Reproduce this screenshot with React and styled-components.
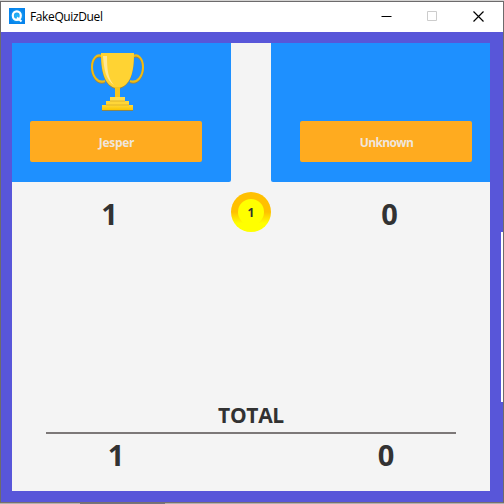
import React from "react";
import styled, { createGlobalStyle } from "styled-components";

const GlobalStyle = createGlobalStyle`
  *, *::before, *::after { box-sizing: border-box; }
  html, body { margin: 0; padding: 0; overflow: hidden; background: #c8c7c6; }
`;

const Desktop = styled.div`
  width: 504px;
  height: 504px;
  overflow: hidden;
  padding-top: 1px;
  position: relative;
  background: linear-gradient(#d4d3d2 0 50%, #b3b0b0 50%);
  font-family: "Open Sans", "Noto Sans", sans-serif;
  color: #323232;
`;

const Window = styled.div`
  height: 502px;
  display: flex;
  flex-direction: column;
  border: 1px solid #6d6b6c;
  border-bottom-color: #77706f;
  background: #5856d9;
`;

const TitleBar = styled.header`
  height: 30px;
  flex: none;
  display: flex;
  align-items: center;
  padding: 0 2px 2px 8px;
  background: #fff;
`;

const AppIcon = styled.svg`
  width: 16px;
  height: 16px;
  margin-right: 5px;
`;

const Title = styled.span`
  flex: 1;
  padding-top: 2px;
  font-size: 12px;
  line-height: 16px;
  letter-spacing: -0.38px;
  color: #000;
`;

const Controls = styled.div`
  display: flex;
  height: 28px;
`;

const ControlButton = styled.button`
  width: 46px;
  height: 28px;
  padding: 0;
  border: 0;
  display: grid;
  place-items: center;
  background: none;
  color: ${(p) => (p.$muted ? "#ccc" : "#000")};
`;

const Glyph = styled.svg`
  width: 11px;
  height: 11px;
  fill: none;
  stroke: currentColor;
`;

const Content = styled.main`
  width: 478px;
  height: 448px;
  margin: 11px 0 0 11px;
  display: flex;
  flex-direction: column;
  background: #f4f4f4;
`;

const Players = styled.section`
  display: flex;
  justify-content: space-between;
`;

const PlayerCard = styled.div`
  width: 219px;
  height: 139px;
  display: flex;
  flex-direction: column;
  justify-content: space-between;
  padding: 9px ${(p) => (p.$side === "left" ? "29px 20px 18px" : "18px 20px 29px")};
  background: #1e90ff;
  border-radius: ${(p) => (p.$side === "left" ? "0 0 2px 0" : "0 0 0 2px")};
`;

const TrophySlot = styled.div`
  height: 60px;
  display: flex;
  justify-content: center;
  padding-left: 4px;
`;

const NameButton = styled.button`
  width: 172px;
  height: 41px;
  border: 0;
  border-radius: 2px;
  padding: 2px 0 0 1px;
  background: #ffab1f;
  color: #f0e6dc;
  font: 700 12px "Open Sans", sans-serif;
  letter-spacing: ${(p) => p.$tracking || "0"};
`;

const RoundRow = styled.section`
  display: grid;
  grid-template-columns: 219px 40px 219px;
  margin-top: 10px;
  height: 40px;
`;

const Score = styled.div`
  font-size: 29px;
  font-weight: 700;
  line-height: 40px;
  text-align: center;
  padding-left: ${(p) => p.$indent || "0"};
  padding-top: ${(p) => p.$drop || "0"};
  padding-right: ${(p) => p.$outdent || "0"};
`;

const Coin = styled.div`
  width: 40px;
  height: 40px;
  border-radius: 50%;
  display: grid;
  place-items: center;
  background: linear-gradient(#ffc000 0 50%, #ff0 78%);
`;

const CoinFace = styled.div`
  width: 26px;
  height: 26px;
  border-radius: 50%;
  background: #ff0;
  text-align: center;
  font-size: 12px;
  line-height: 27px;
  font-weight: 700;
`;

const Totals = styled.section`
  margin-top: auto;
  height: 94px;
  padding: 0 34px;
`;

const TotalLabel = styled.h2`
  margin: 0;
  height: 35px;
  text-align: center;
  font-size: 21px;
  line-height: 37px;
  font-weight: 700;
  letter-spacing: -0.3px;
`;

const Divider = styled.hr`
  width: 410px;
  height: 2px;
  margin: 0;
  border: 0;
  background: #7c7878;
`;

const TotalRow = styled.div`
  display: grid;
  grid-template-columns: 140px 130px 140px;
`;

const EdgeStrip = styled.div`
  position: absolute;
  left: 501px;
  top: 232px;
  width: 2px;
  height: 170px;
  background: #fff;
`;

const EdgeShade = styled.div`
  position: absolute;
  left: 80px;
  top: 503px;
  width: 85px;
  height: 1px;
  background: #74757f;
`;

function Trophy() {
  return (
    <svg width="56" height="60" viewBox="0 0 56 60">
      <defs>
        <linearGradient id="base" x1="0" y1="0" x2="0" y2="1">
          <stop offset="0" stopColor="#ffd83a" />
          <stop offset="1" stopColor="#fac400" />
        </linearGradient>
      </defs>
      <g fill="none" strokeWidth="2">
        <path d="M12 4.5C7 1 2 7 2 15s5 17 13 14M43 4.5c5-3.5 10 2.5 10 10.500s-5 17-13 14" stroke="#99864b" transform="translate(0 1)" />
        <path d="M12 4.5C7 1 2 7 2 15s5 17 13 14M43 4.5c5-3.5 10 2.500 10 10.500s-5 17-13 14" stroke="#f0bc12" />
      </g>
      <path d="M11 2h33c0 17-3 34-17 35C14 36 11 19 11 2Z" fill="#a28a3c" />
      <path d="M11 1h33c0 18-3 34-17 35C14 35 11 18 11 1Z" fill="#ffd333" />
      <path d="M13 4h4c0 13 1 23 7 29C16 28 14 18 13 4Z" fill="#ffe797" />
      <path d="M25 35h5v11h-5z" fill="#f6c51b" />
      <path d="M20 45h15v4H20z" fill="#ffdc4a" />
      <path d="M16 49h23v4H16z" fill="#ffd638" />
      <path d="M12 53h31v6H12z" fill="#8b864f" />
      <path d="M12 53h31v5H12z" fill="url(#base)" />
      <path d="M20 49h15M16 53h23" stroke="#c99d22" strokeWidth=".6" />
    </svg>
  );
}

export default function App() {
  return (
    <Desktop>
      <GlobalStyle />
      <Window>
        <TitleBar>
          <AppIcon viewBox="0 0 16 16">
            <defs>
              <radialGradient id="sky">
                <stop stopColor="#2ab9f7" />
                <stop offset="1" stopColor="#0784ec" />
              </radialGradient>
            </defs>
            <path fill="url(#sky)" d="M0 0h16v16H0z" />
            <ellipse cx="7.8" cy="7.6" rx="4" ry="4.3" fill="none" stroke="#fff" strokeWidth="2.2" />
            <path d="m8 9.500 4.500 4" stroke="#fff" strokeWidth="2" />
          </AppIcon>
          <Title>FakeQuizDuel</Title>
          <Controls>
            <ControlButton aria-label="Minimize">
              <Glyph viewBox="0 0 11 11"><path d="M.5 5.500h10" /></Glyph>
            </ControlButton>
            <ControlButton aria-label="Maximize" $muted>
              <Glyph viewBox="0 0 11 11"><path d="M.5.5h9v9h-9z" /></Glyph>
            </ControlButton>
            <ControlButton aria-label="Close">
              <Glyph viewBox="0 0 11 11"><path d="m.5.5 10 10m0-10-10 10" strokeWidth="1.2" /></Glyph>
            </ControlButton>
          </Controls>
        </TitleBar>
        <Content>
          <Players>
            <PlayerCard $side="left">
              <TrophySlot><Trophy /></TrophySlot>
              <NameButton $tracking="-0.25px">Jesper</NameButton>
            </PlayerCard>
            <PlayerCard $side="right">
              <TrophySlot />
              <NameButton $tracking="-0.6px">Unknown</NameButton>
            </PlayerCard>
          </Players>
          <RoundRow>
            <Score $outdent="24px" $drop="2px">1</Score>
            <Coin><CoinFace>1</CoinFace></Coin>
            <Score $indent="18px" $drop="2px">0</Score>
          </RoundRow>
          <Totals>
            <TotalLabel>TOTAL</TotalLabel>
            <Divider />
            <TotalRow>
              <Score $drop="1px">1</Score>
              <span />
              <Score $drop="1px">0</Score>
            </TotalRow>
          </Totals>
        </Content>
      </Window>
      <EdgeStrip />
      <EdgeShade />
    </Desktop>
  );
}
